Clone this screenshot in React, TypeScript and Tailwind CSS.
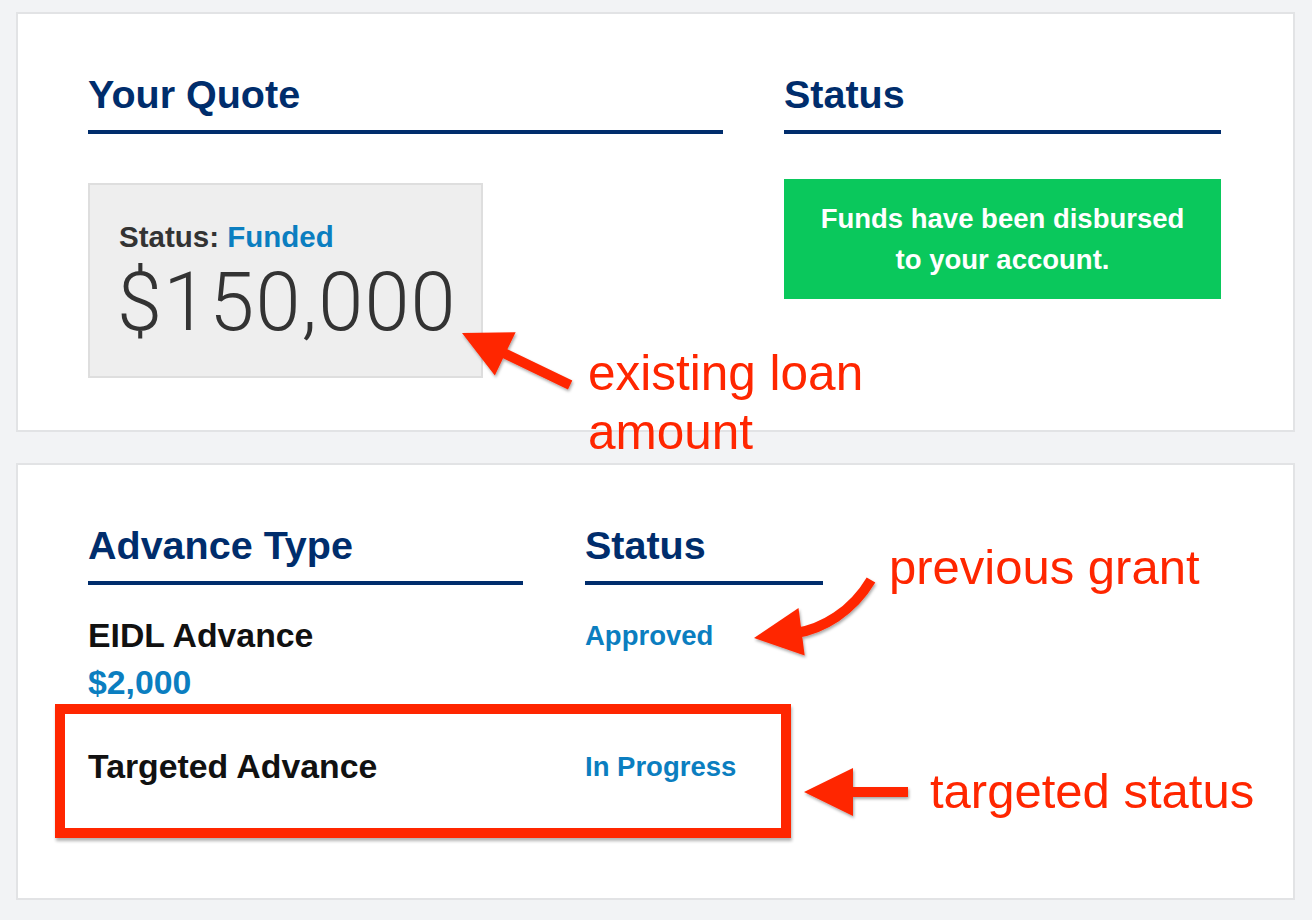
import React from "react";

const SANS = { fontFamily: '"Liberation Sans", Arial, Helvetica, sans-serif' };

function Heading({ children }: { children: React.ReactNode }) {
  return (
    <div className="border-b-4 border-[#002d6c] pb-[13px]">
      <h2 className="text-[39.5px] leading-[45px] font-bold text-[#002d6c]">{children}</h2>
    </div>
  );
}

function Annotations() {
  const red = "#ff2600";
  return (
    <>
      <svg
        className="absolute left-0 top-0 pointer-events-none"
        width={1312}
        height={920}
        viewBox="0 0 1312 920"
      >
        <defs>
          <filter id="sh" x="-20%" y="-20%" width="140%" height="140%">
            <feDropShadow dx="1" dy="2" stdDeviation="1.5" floodColor="#000" floodOpacity="0.35" />
          </filter>
        </defs>
        <g filter="url(#sh)" fill={red}>
          <polygon
            transform="translate(462,333) rotate(25.7)"
            points="0,0 48,-24 48,-5 120,-5 120,5 48,5 48,24"
          />
          <polygon
            transform="translate(804,792)"
            points="0,0 49,-24 49,-5 104,-5 104,5 49,5 49,24"
          />
          <path
            d="M 796 633 C 822 629, 852 612, 871 580"
            fill="none"
            stroke={red}
            strokeWidth={10}
          />
          <polygon transform="translate(754,638) rotate(-7.4)" points="0,0 48,-24 48,24" />
        </g>
      </svg>
      <div className="absolute left-[55px] top-[704px] w-[736px] h-[134px] border-[10px] border-[#ff2600] shadow-[1px_3px_3px_rgba(0,0,0,0.3)] pointer-events-none" />
      <div
        className="absolute left-[588px] top-[343px] text-[49.5px] leading-[59px] text-[#ff2600] whitespace-nowrap"
        style={SANS}
      >
        existing loan
        <br />
        amount
      </div>
      <div
        className="absolute left-[889px] top-[537px] text-[49px] leading-[60px] text-[#ff2600] whitespace-nowrap"
        style={SANS}
      >
        previous grant
      </div>
      <div
        className="absolute left-[930px] top-[761px] text-[49px] leading-[60px] text-[#ff2600] whitespace-nowrap"
        style={SANS}
      >
        targeted status
      </div>
    </>
  );
}

export default function App() {
  return (
    <div className="relative w-[1312px] min-h-[920px] bg-[#f2f3f5] pt-[12px] overflow-hidden" style={SANS}>
      {/* Card 1 */}
      <div className="ml-[16px] w-[1279px] h-[420px] bg-white border-2 border-[#e2e3e5] pl-[70px] pt-[58px]">
        <div className="grid grid-cols-[635px_437px] gap-x-[61px]">
          <div>
            <Heading>Your Quote</Heading>
            <div className="mt-[49px] w-[395px] h-[195px] bg-[#eeeeee] border-2 border-[#dedede] pl-[29px] pt-[35px]">
              <div className="text-[29.5px] leading-[34px] font-bold text-[#333]">
                Status: <span className="text-[#0b7ec0]">Funded</span>
              </div>
              <div
                className="mt-[9px] -ml-[2px] text-[81px] leading-[80px] font-light tracking-[1.2px] text-[#333] whitespace-nowrap"
                style={{ fontFamily: 'Roboto, "Liberation Sans", sans-serif' }}
              >
                $150,000
              </div>
            </div>
          </div>
          <div>
            <Heading>Status</Heading>
            <div className="mt-[45px] h-[120px] bg-[#0ac85c] flex items-center justify-center text-center text-white font-bold text-[27.5px] leading-[41px]">
              <div>
                Funds have been disbursed
                <br />
                to your account.
              </div>
            </div>
          </div>
        </div>
      </div>

      {/* Card 2 */}
      <div className="ml-[16px] mt-[31px] w-[1279px] h-[437px] bg-white border-2 border-[#e2e3e5] pl-[70px] pt-[58px]">
        <div className="grid grid-cols-[435px_238px] gap-x-[62px]">
          <Heading>Advance Type</Heading>
          <Heading>Status</Heading>
          <div className="mt-[27px] text-[33.8px] leading-[47px] font-bold">
            <div className="text-[#111]">EIDL Advance</div>
            <div className="text-[#0b7ec0]">$2,000</div>
          </div>
          <div className="mt-[27px] text-[27.5px] leading-[47px] font-bold text-[#0b7ec0]">Approved</div>
          <div className="mt-[37px] text-[33.8px] leading-[47px] font-bold text-[#111]">Targeted Advance</div>
          <div className="mt-[37px] text-[27.5px] leading-[47px] font-bold text-[#0b7ec0]">In Progress</div>
        </div>
      </div>

      <Annotations />
    </div>
  );
}
